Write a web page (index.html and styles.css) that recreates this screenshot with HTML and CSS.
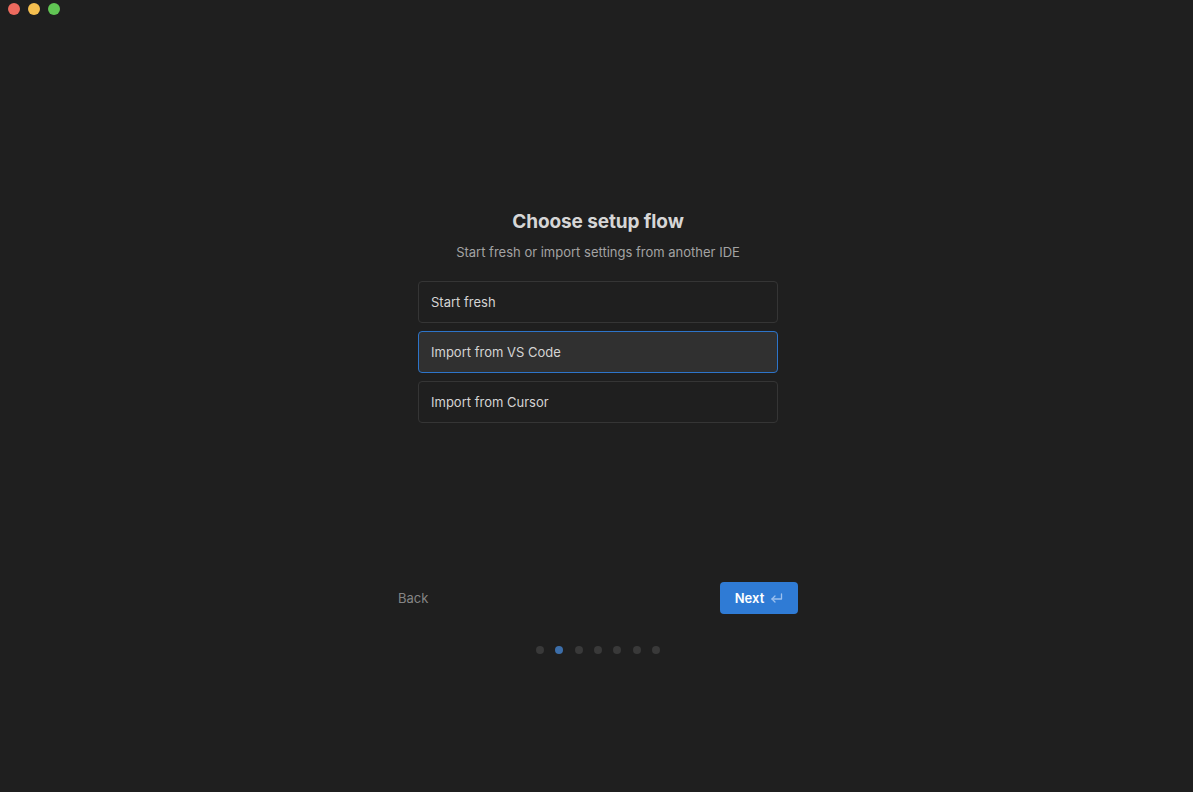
FILE: index.html
```html
<!DOCTYPE html>
<html lang="en">
<head>
    <meta charset="UTF-8">
    <title>Choose setup flow</title>
    <link rel="stylesheet" href="styles.css">
</head>
<body>
    <div class="titlebar">
        <span class="light red"></span>
        <span class="light yellow"></span>
        <span class="light green"></span>
    </div>

    <div class="setup">
        <h1>Choose setup flow</h1>
        <p class="subtitle">Start fresh or import settings from another IDE</p>

        <div class="options">
            <div class="option">Start fresh</div>
            <div class="option selected">Import from VS Code</div>
            <div class="option">Import from Cursor</div>
        </div>

        <div class="footer">
            <button class="back-button">Back</button>
            <button class="next-button">
                Next
                <svg width="13" height="11" viewBox="0 0 13 11" fill="none" stroke="#9cc0ee" stroke-width="1.3" stroke-linecap="round" stroke-linejoin="round">
                    <path d="M11.5 1v5H2"/>
                    <path d="M5 3L2 6l3 3"/>
                </svg>
            </button>
        </div>

        <div class="dots">
            <span class="dot"></span>
            <span class="dot active"></span>
            <span class="dot"></span>
            <span class="dot"></span>
            <span class="dot"></span>
            <span class="dot"></span>
            <span class="dot"></span>
        </div>
    </div>
</body>
</html>
```

FILE: styles.css
```css
body, html {
    margin: 0;
    padding: 0;
    height: 100%;
    overflow: hidden;
    background: #1f1f1f;
    font-family: Inter, "Noto Sans", sans-serif;
}

.titlebar {
    height: 28px;
    display: flex;
    align-items: flex-start;
    gap: 8px;
    padding: 3px 0 0 8px;
    box-sizing: border-box;
}

.light {
    width: 12px;
    height: 12px;
    border-radius: 50%;
}

.red { background: #ed6a5e; }
.yellow { background: #f5bf4f; }
.green { background: #61c554; }

.setup {
    display: flex;
    flex-direction: column;
    align-items: center;
    margin-top: 182px;
    padding-left: 3px;
}

.setup h1 {
    margin: 0;
    font-size: 19px;
    line-height: 24px;
    font-weight: 700;
    color: #d6d6d6;
    letter-spacing: -0.1px;
}

.subtitle {
    margin: 9px 0 20px;
    font-size: 13px;
    line-height: 18px;
    color: #a3a3a3;
}

.options {
    width: 360px;
    display: flex;
    flex-direction: column;
    gap: 8px;
}

.option {
    height: 42px;
    box-sizing: border-box;
    border: 1px solid #353535;
    border-radius: 4px;
    padding: 0 12px;
    display: flex;
    align-items: center;
    font-size: 13px;
    color: #d4d4d4;
    background: #1f1f1f;
}

.option.selected {
    background: #303030;
    border-color: #2d74c9;
}

.footer {
    width: 400px;
    margin-top: 159px;
    display: flex;
    justify-content: space-between;
    align-items: center;
}

.back-button {
    background: none;
    border: none;
    padding: 0;
    font-family: inherit;
    font-size: 13px;
    color: #858585;
}

.next-button {
    height: 32px;
    width: 78px;
    background: #2f7bd5;
    border: none;
    border-radius: 4px;
    display: flex;
    align-items: center;
    justify-content: center;
    gap: 6px;
    font-family: inherit;
    font-size: 13px;
    font-weight: 600;
    color: #ffffff;
    padding: 0;
}

.dots {
    margin-top: 32px;
    display: flex;
    gap: 11.4px;
}

.dot {
    width: 8px;
    height: 8px;
    border-radius: 50%;
    background: #393939;
}

.dot.active {
    background: #3c6ea9;
}
```
